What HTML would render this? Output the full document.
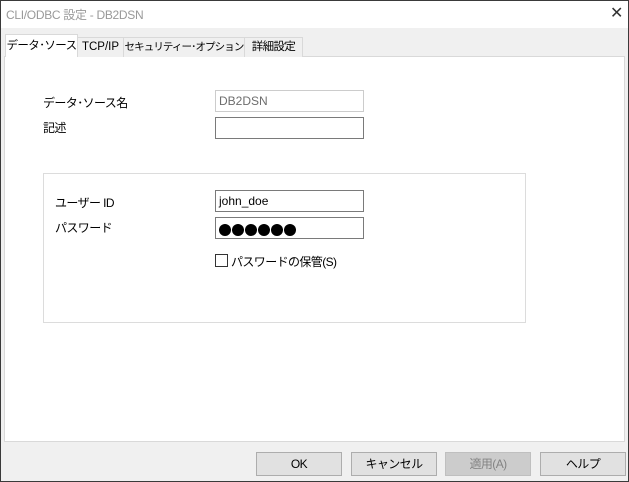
<!DOCTYPE html>
<html><head><meta charset="utf-8"><style>
*{margin:0;padding:0;box-sizing:border-box}
body{width:629px;height:482px;overflow:hidden;font-family:"Liberation Sans","Noto Sans CJK JP",sans-serif;font-size:12px;color:#000;background:#f0f0f0;position:relative;letter-spacing:-0.6px}
.win{position:absolute;left:0;top:0;width:629px;height:482px;border:1px solid #3a3a3a;z-index:5;pointer-events:none}
.title{position:absolute;left:0;top:0;width:629px;height:28px;background:#fff;}
.title span{position:absolute;left:6px;top:6px;color:#999;font-size:12px;letter-spacing:-0.3px}
.x{position:absolute;left:610px;top:3px;font-size:16px;color:#333}
.a{position:absolute;white-space:nowrap}
.tab{position:absolute;top:37px;height:20px;border:1px solid #d9d9d9;border-bottom:none;background:#f0f0f0;text-align:center;line-height:18px;white-space:nowrap;overflow:hidden;font-size:11.5px;letter-spacing:-0.6px}
.panel{position:absolute;left:4px;top:56px;width:621px;height:386px;background:#fff;border:1px solid #d9d9d9}
.inp{position:absolute;left:215px;width:149px;height:22px;border:1px solid #7a7a7a;background:#fff;padding-left:3px;line-height:20px;white-space:nowrap;overflow:hidden}
.btn{position:absolute;top:452px;width:86px;height:24px;border:1px solid #adadad;background:#e1e1e1;text-align:center;line-height:22px}
</style></head><body>
<div class="win"></div>
<div class="title"><span>CLI/ODBC 設定 - DB2DSN</span><div class="x">✕</div></div>
<div class="panel"></div>
<div class="tab" style="left:77px;width:47px;letter-spacing:0">TCP/IP</div>
<div class="tab" style="left:123px;width:122px;font-size:10.5px;letter-spacing:-0.9px">セキュリティー･オプション</div>
<div class="tab" style="left:244px;width:59px">詳細設定</div>
<div class="tab" style="left:5px;top:34px;height:23px;width:73px;background:#fff;line-height:22px">データ･ソース</div>
<div class="a" style="left:43px;top:94px">データ･ソース名</div>
<div class="inp" style="top:90px;border-color:#ccc;color:#6d6d6d;letter-spacing:0">DB2DSN</div>
<div class="a" style="left:43px;top:119px">記述</div>
<div class="inp" style="top:117px"></div>
<div class="a" style="left:43px;top:173px;width:483px;height:150px;border:1px solid #dcdcdc"></div>
<div class="a" style="left:55px;top:194px">ユーザー ID</div>
<div class="inp" style="top:190px;letter-spacing:0">john_doe</div>
<div class="a" style="left:55px;top:219px">パスワード</div>
<div class="inp" style="top:217px;padding:4px 0 0 3px">
<svg width="80" height="12"><g fill="#000"><circle cx="6" cy="6" r="6"/><circle cx="19" cy="6" r="6"/><circle cx="32" cy="6" r="6"/><circle cx="45" cy="6" r="6"/><circle cx="58" cy="6" r="6"/><circle cx="71" cy="6" r="6"/></g></svg></div>
<div class="a" style="left:215px;top:254px;width:13px;height:13px;border:1px solid #333;background:#fff"></div>
<div class="a" style="left:231px;top:253px">パスワードの保管(S)</div>
<div class="btn" style="left:256px">OK</div>
<div class="btn" style="left:351px">キャンセル</div>
<div class="btn" style="left:445px;background:#ccc;border-color:#bfbfbf;color:#838383">適用(A)</div>
<div class="btn" style="left:540px">ヘルプ</div>
</body></html>
